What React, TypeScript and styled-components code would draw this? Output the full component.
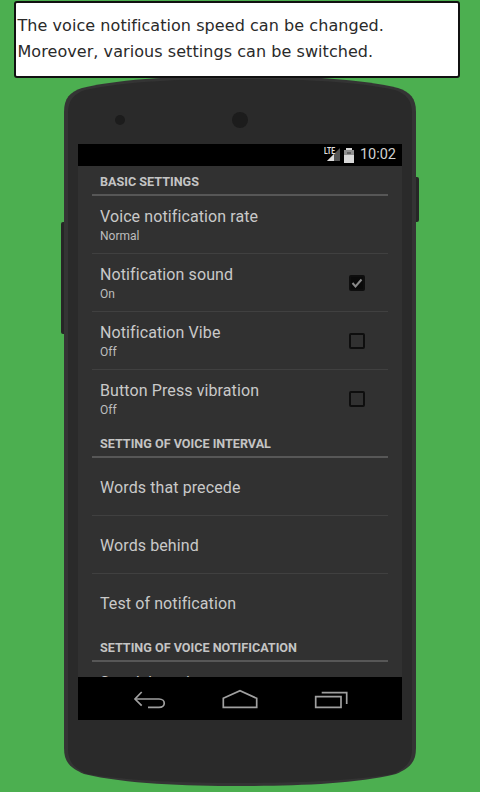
import styled, { createGlobalStyle } from "styled-components";

const GlobalStyle = createGlobalStyle`
  html, body {
    margin: 0;
    padding: 0;
    background: #4caf50;
  }
`;

const Page = styled.div`
  width: 480px;
  height: 792px;
  overflow: hidden;
  display: flex;
  flex-direction: column;
  align-items: center;
  background: #4caf50;
`;

const Banner = styled.div`
  position: relative;
  z-index: 2;
  box-sizing: border-box;
  width: 446px;
  height: 77px;
  margin: 1px 0 0 -7px;
  padding: 10px 0 0 2px;
  background: #fff;
  border: 2px solid #111;
  border-radius: 3px;
  font-family: "DejaVu Sans", sans-serif;
  font-size: 16px;
  line-height: 26px;
  letter-spacing: 0.06px;
  color: #2a2a2a;
`;

const PhoneFrame = styled.div`
  position: relative;
  width: 352px;
  height: 710px;
  margin-top: -2px;
`;

const SideKey = styled.div<{ $side: "left" | "right"; $top: number; $height: number }>`
  position: absolute;
  top: ${(p) => p.$top}px;
  ${(p) => p.$side}: -3px;
  width: 6px;
  height: ${(p) => p.$height}px;
  border-radius: 2px;
  background: #262626;
`;

const Shell = styled.div`
  position: relative;
  width: 352px;
  height: 710px;
  background: #343434;
  clip-path: path("M0,36 C0,22 6,16 18,12 C60,2 120,0 176,0 C232,0 292,2 334,12 C346,16 352,22 352,36 L352,672 C352,686 346,692 332,698 C290,708 232,710 176,710 C120,710 62,708 20,698 C6,692 0,686 0,672 Z");
`;

const Face = styled.div`
  position: absolute;
  left: 4px;
  top: 3px;
  width: 344px;
  height: 704px;
  background: #2a2a2a;
  clip-path: path("M0,34 C0,21 6,15 17,11 C58,2 118,0 172,0 C226,0 286,2 327,11 C338,15 344,21 344,34 L344,670 C344,683 338,689 325,695 C284,702 226,704 172,704 C118,704 60,702 19,695 C6,689 0,683 0,670 Z");
`;

const Front = styled.div`
  position: relative;
  display: flex;
  flex-direction: column;
  padding: 0 14px;
`;

const TopBezel = styled.div`
  box-sizing: border-box;
  height: 68px;
  padding: 20px 0 0 37px;
  display: flex;
  align-items: center;
  gap: 107px;
`;

const Lens = styled.div<{ $size: number }>`
  width: ${(p) => p.$size}px;
  height: ${(p) => p.$size}px;
  border-radius: 50%;
  background: #1c1c1c;
`;

const StatusBar = styled.div`
  height: 22px;
  background: #000;
  display: flex;
  align-items: center;
  justify-content: flex-end;
  padding-right: 6px;
  font-family: Roboto, sans-serif;
  color: #d0d0d0;
`;

const SignalWrap = styled.div`
  position: relative;
  width: 16px;
  height: 16px;
  margin-right: 4px;
`;

const LteLabel = styled.span`
  position: absolute;
  left: 0;
  top: -1px;
  font-size: 8.5px;
  line-height: 10px;
  font-weight: 700;
  transform: scaleX(0.8);
  transform-origin: left top;
  color: #e0e0e0;
`;

const Clock = styled.span`
  margin-left: 6px;
  font-size: 14.5px;
  line-height: 22px;
`;

const Content = styled.div`
  height: 511px;
  overflow: hidden;
  background: #313131;
  padding: 0 14px;
  font-family: Roboto, sans-serif;
`;

const SectionHeader = styled.div`
  box-sizing: border-box;
  height: 30px;
  padding: 9px 0 0 8px;
  border-bottom: 2px solid #575757;
  font-size: 12.6px;
  line-height: 14px;
  font-weight: 700;
  color: #c4c4c4;
`;

const Row = styled.div<{ $last?: boolean }>`
  box-sizing: border-box;
  height: 58px;
  padding: 3px 23px 0 8px;
  display: flex;
  align-items: center;
  justify-content: space-between;
  border-bottom: 1px solid ${(p) => (p.$last ? "transparent" : "#404040")};
`;

const RowText = styled.div`
  display: flex;
  flex-direction: column;
`;

const Title = styled.span`
  font-size: 16px;
  line-height: 20px;
  color: #c9c9c9;
  letter-spacing: 0.1px;
`;

const Subtitle = styled.span`
  font-size: 12px;
  line-height: 18px;
  color: #bdbdbd;
`;

const Check = styled.div<{ $on?: boolean }>`
  box-sizing: border-box;
  width: 16px;
  height: 16px;
  margin-top: -3px;
  border: 2px solid #0e0e0e;
  border-radius: 2px;
  background: ${(p) => (p.$on ? "#0a0a0a" : "transparent")};
  display: flex;
  align-items: center;
  justify-content: center;
`;

const NavBar = styled.div`
  box-sizing: border-box;
  height: 43px;
  padding-top: 3px;
  background: #000;
  display: flex;
  align-items: center;
  justify-content: center;
`;

const NavSlot = styled.div`
  width: 90px;
  display: flex;
  justify-content: center;
`;

const NavIcon = styled.svg.attrs({ viewBox: "0 0 40 24", fill: "none" })`
  display: block;
  width: 40px;
  height: 24px;
  stroke: #a0a0a0;
  stroke-width: 1.7;
`;

const items = {
  basic: [
    { title: "Voice notification rate", sub: "Normal" },
    { title: "Notification sound", sub: "On", check: "on" },
    { title: "Notification Vibe", sub: "Off", check: "off" },
    { title: "Button Press vibration", sub: "Off", check: "off" },
  ],
  interval: [
    { title: "Words that precede" },
    { title: "Words behind" },
    { title: "Test of notification" },
  ],
};

type Item = { title: string; sub?: string; check?: string };

const SettingRow = ({ item, last }: { item: Item; last?: boolean }) => (
  <Row $last={last}>
    <RowText>
      <Title>{item.title}</Title>
      {item.sub && <Subtitle>{item.sub}</Subtitle>}
    </RowText>
    {item.check && (
      <Check $on={item.check === "on"}>
        {item.check === "on" && (
          <svg width="12" height="12" viewBox="0 0 12 12" fill="none">
            <path d="M1.5 6 L4.5 9.5 L10.5 2.5" stroke="#8a8a8a" strokeWidth="2" />
          </svg>
        )}
      </Check>
    )}
  </Row>
);

const App = () => {
  return (
    <Page>
      <GlobalStyle />
      <Banner>
        The voice notification speed can be changed.
        <br />
        Moreover, various settings can be switched.
      </Banner>
      <PhoneFrame>
        <SideKey $side="left" $top={146} $height={112} />
        <SideKey $side="right" $top={101} $height={45} />
        <Shell>
          <Face />
          <Front>
            <TopBezel>
              <Lens $size={10} />
              <Lens $size={16} />
            </TopBezel>
            <StatusBar>
              <SignalWrap>
                <svg width="16" height="16" viewBox="0 0 16 16">
                  <path d="M3 14 L16 1 V14 Z" fill="#555" />
                  <path d="M3 14 L10 7 V14 Z" fill="#dcdcdc" />
                </svg>
                <LteLabel>LTE</LteLabel>
              </SignalWrap>
              <svg width="10" height="15" viewBox="0 0 10 15">
                <path d="M2 0 H8 V2 H10 V15 H0 V2 H2 Z" fill="#d8d8d8" />
                <path d="M0 2 H10 V7 H0 Z" fill="#8f8f8f" />
                <path d="M3 5 H7" stroke="#333" strokeWidth="1" />
              </svg>
              <Clock>10:02</Clock>
            </StatusBar>
            <Content>
              <SectionHeader>BASIC SETTINGS</SectionHeader>
              {items.basic.map((item, index) => (
                <SettingRow key={index} item={item} last={index === items.basic.length - 1} />
              ))}
              <SectionHeader>SETTING OF VOICE INTERVAL</SectionHeader>
              {items.interval.map((item, index) => (
                <SettingRow key={index} item={item} last={index === items.interval.length - 1} />
              ))}
              <SectionHeader>SETTING OF VOICE NOTIFICATION</SectionHeader>
              <SettingRow item={{ title: "Speak by voice", sub: "Normal" }} />
            </Content>
            <NavBar>
              <NavSlot>
                <NavIcon>
                  <path d="M11.7 4 L5 11 L11.7 17.7" />
                  <path d="M5 11 H29 C36 11 36 19.3 29 19.3 H18" />
                </NavIcon>
              </NavSlot>
              <NavSlot>
                <NavIcon>
                  <path d="M3.3 10.3 L20 2.7 L36.7 10.3 V19.3 H3.3 Z" />
                </NavIcon>
              </NavSlot>
              <NavSlot>
                <NavIcon>
                  <path d="M5.7 8.7 H31 V19.3 H5.7 Z" />
                  <path d="M11.7 4.7 H36.7 V16" />
                </NavIcon>
              </NavSlot>
            </NavBar>
          </Front>
        </Shell>
      </PhoneFrame>
    </Page>
  );
};

export default App;
